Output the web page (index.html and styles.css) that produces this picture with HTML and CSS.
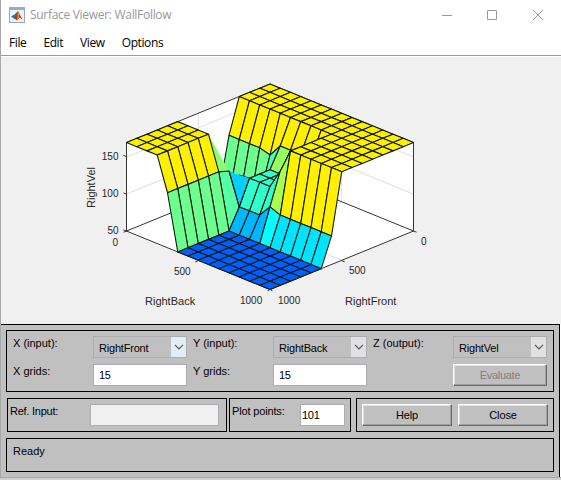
FILE: index.html
```html
<!DOCTYPE html>
<html lang="en">
<head>
<meta charset="utf-8">
<title>Surface Viewer: WallFollow</title>
<link rel="stylesheet" href="styles.css">
</head>
<body>
<div class="window">
  <header class="titlebar">
    <svg class="app-icon" width="16" height="16" viewBox="0 0 16 16">
      <rect x=".5" y=".5" width="15" height="15" fill="#eef2f5" stroke="#a0a8ae"/>
      <rect x="0" y="0" width="16" height="3" fill="#8fb0c8"/>
      <path d="M2 9.500 5.500 7.500 9 4 7.500 11 5.500 12Z" fill="#2f6f9f"/>
      <path d="M5.500 11.500 7.500 8 9 4 11 8 13.500 12.500 10.500 10.500 8 13.500Z" fill="#b73520"/>
      <path d="M9 4 10.200 8 10 10.500 8 13Z" fill="#f28c28"/>
    </svg>
    <span class="title">Surface Viewer: WallFollow</span>
    <svg class="controls" width="102" height="12" viewBox="0 0 102 12" fill="none" stroke="#999">
      <path d="M0 6.500H10M45.500 1.500H54.500V10.500H45.500Z"/>
      <path d="M91 1 101 11M101 1 91 11"/>
    </svg>
  </header>
  <nav class="menu"><span>File</span><span>Edit</span><span>View</span><span>Options</span></nav>
  <main class="plot"><svg id="plot" width="560" height="267" viewBox="1 57 560 267"></svg></main>
  <section class="panel">
    <div class="box inputs">
      <label>X (input):</label>
      <div class="combo active"><span>RightFront</span><i><svg width="10" height="6" viewBox="0 0 10 6"><path d="M1 .8 5 4.800 9 .8"/></svg></i></div>
      <label>Y (input):</label>
      <div class="combo"><span>RightBack</span><i><svg width="10" height="6" viewBox="0 0 10 6"><path d="M1 .8 5 4.800 9 .8"/></svg></i></div>
      <label>Z (output):</label>
      <div class="combo"><span>RightVel</span><i><svg width="10" height="6" viewBox="0 0 10 6"><path d="M1 .8 5 4.800 9 .8"/></svg></i></div>
      <label>X grids:</label>
      <div class="edit">15</div>
      <label>Y grids:</label>
      <div class="edit">15</div>
      <div></div>
      <div class="button disabled">Evaluate</div>
    </div>
    <div class="row">
      <div class="box ref"><label>Ref. Input:</label><div class="edit off"></div></div>
      <div class="box points"><label>Plot points:</label><div class="edit">101</div></div>
      <div class="box actions"><div class="button">Help</div><div class="button">Close</div></div>
    </div>
    <div class="box status">Ready</div>
  </section>
</div>
<script src="surface.js"></script>
</body>
</html>
```
FILE: styles.css
```css
* { box-sizing: border-box; }
body { margin: 0; background: #d0d0d0; overflow: hidden; font: 11px/13px "Liberation Sans", sans-serif; color: #000; }
.window { width: 561px; height: 478px; border-left: 1px solid #a8a8a8; border-bottom: 1px solid #a8a8a8; display: flex; flex-direction: column; background: #fff; }
.titlebar { height: 29px; display: flex; align-items: center; padding: 0 17px 0 8px; font: 12px/16px "Open Sans", "Noto Sans", sans-serif; color: #999; }
.title { margin-left: 5px; flex: 1; letter-spacing: -.3px; padding-top: 1px; }
.app-icon { display: block; }
.menu { height: 28px; display: flex; gap: 17px; padding: 6px 8px 0; font: 12px/16px "Open Sans", "Noto Sans", sans-serif; letter-spacing: -.4px; border-bottom: 1px solid #fff; background: linear-gradient(#999, #999) 0 26px / 100% 1px no-repeat; }
.plot { height: 267px; background: #f0f0f0; }
.plot svg { display: block; }
.plot text { font: 11px "Liberation Sans", sans-serif; fill: #262626; }
.plot .tick { font-size: 10px; letter-spacing: 0; }
.panel { height: 153px; width: 559px; background: #c0c0c0; border-top: 1px solid #000; border-right: 1px solid #000; padding: 5px 5px 0; display: flex; flex-direction: column; gap: 6px; }
.box { border: 1px solid #000; }
.inputs { height: 62px; width: 548px; padding: 5px 6px; display: grid; grid-template-columns: 80px 100px 80px 100px 80px 94px; grid-template-rows: 22px 22px; row-gap: 6px; }
.combo, .inputs .edit { width: 94px; }
label { padding-top: 1px; white-space: nowrap; }
.combo { height: 22px; border: 1px solid #acacb2; display: flex; justify-content: space-between; }
.combo span { padding: 5px 0 0 5px; letter-spacing: -.2px; }
.combo i { width: 15px; background: #e1e1e1; display: flex; align-items: center; justify-content: center; }
.combo.active i { background: #e3edf7; }
.combo path { fill: none; stroke: #555; stroke-width: 1.2; }
.edit { height: 22px; background: #fff; border: 1px solid #acacb2; padding: 4px 0 0 5px; letter-spacing: -.3px; }
.edit.off { background: #f0f0f0; }
.button { height: 22px; border: 1px solid; border-color: #fff #696969 #696969 #fff; box-shadow: inset -1px -1px #a0a0a0, inset 1px 1px #e3e3e3; text-align: center; padding-top: 4px; letter-spacing: -.1px; }
.disabled { color: #808080; letter-spacing: -.3px; }
.row { display: flex; height: 34px; margin-left: 1px; }
.row .box { display: flex; padding-top: 5px; }
.ref { width: 220px; padding-left: 2px; }
.ref label { width: 80px; letter-spacing: -.25px; }
.ref .edit { width: 129px; }
.points { width: 122px; margin-left: 2px; padding-left: 2px; }
.points label { width: 68px; letter-spacing: -.15px; }
.points .edit { width: 45px; padding-left: 1px; }
.actions { width: 198px; margin-left: 5px; padding-left: 5px; gap: 6px; }
.actions .button { width: 90px; }
.status { height: 34px; width: 548px; padding: 6px; }
```
FILE: surface.js
```js
const N = 14, svg = document.getElementById('plot');
const add = (tag, attrs, text) => {
  const el = document.createElementNS('http://www.w3.org/2000/svg', tag);
  for (const k in attrs) el.setAttribute(k, attrs[k]);
  if (text) el.textContent = text;
  svg.appendChild(el);
};
const FLOOR = 88.5;
// i runs along RightBack, j along RightFront, d is the drop below the top plane
const project = (i, j, d) => [270 + 10.25 * (i - j), 84 + 4.18 * (i + j) + d];
const line = (a, b, stroke) => add('line', { x1: a[0], y1: a[1], x2: b[0], y2: b[1], stroke });
const DARK = '#333', GRID = '#dedede';

add('polygon', { points: [[0,14,FLOOR],[0,14,0],[0,0,0],[14,0,0],[14,0,FLOOR],[14,14,FLOOR]].map(p => project(...p)).join(' '), fill: '#fff' });
[14.5, 51.5].forEach(d => {
  line(project(0, 14, d), project(0, 0, d), GRID);
  line(project(0, 0, d), project(14, 0, d), GRID);
});
line(project(0, 7, 0), project(0, 7, FLOOR), GRID);
line(project(7, 0, 0), project(7, 0, FLOOR), GRID);
line(project(0, 7, FLOOR), project(14, 7, FLOOR), GRID);
line(project(7, 0, FLOOR), project(7, 14, FLOOR), GRID);
line(project(0, 14, 0), project(0, 0, 0), DARK);
line(project(0, 0, 0), project(14, 0, 0), DARK);
line(project(0, 14, FLOOR), project(0, 0, FLOOR), DARK);
line(project(0, 0, FLOOR), project(14, 0, FLOOR), DARK);
line([126.5, 142], [126.5, 231.5], DARK);
line([413.5, 142], [413.5, 231.5], DARK);
line(project(0, 14, FLOOR), project(14, 14, FLOOR), DARK);
line(project(14, 14, FLOOR), project(14, 0, FLOOR), DARK);

const row8 = { 5: 68.7, 6: 68.3, 7: 68.3, 8: 56, 9: 60 };
function drop(i, j) {
  if (j <= 3) return 0;
  if (i >= 9) return j <= 7 ? 0 : j === 8 ? 60 : FLOOR;
  if (j === 4) return i === 4 ? 37.6 : i < 4 ? 34.6 : 24.4;
  if (j >= 9) return i <= 3 ? 0 : i === 4 ? 33.5 : FLOOR;
  if (j === 8) return i === 3 ? 23 : i === 4 ? 36.8 : row8[i] || FLOOR;
  if (i >= 5) return i === 8 ? 24.5 : 44;
  if (i === 4) return j === 7 ? 45 : 75;
  return FLOOR;
}
const hidden = (i, j) => (i < 4 && j > 4 && j < 9 && !(i === 3 && j === 8)) || (i === 3 && j > 4 && j < 8);
function colour(i, j) {
  if (i === 3 && j === 8) return '#87ff70';
  if (i === 4 && j === 8) return '#57ffa5';
  if (i === 4 && j === 7) return '#00cfff';
  if (j >= 9) return i <= 3 ? '#fff000' : i === 4 ? '#6cff90' : '#005fff';
  if (j === 8) return i <= 7 ? '#00b7ff' : i === 8 ? '#00ffff' : '#00e4ff';
  if (j === 7 && i === 8) return '#a8ff50';
  if (j <= 3 || i >= 9) return '#fff000';
  if (j === 4) return i <= 3 ? '#6cff90' : i === 4 ? '#45ffb5' : '#98ff60';
  return '#30ffcb';
}
for (let s = 0; s <= 2 * N - 2; s++) {
  for (let i = Math.max(0, s - N + 1); i <= Math.min(N - 1, s); i++) {
    const j = s - i;
    if (hidden(i, j)) continue;
    const plain = (i === 3 && j === 8) || (i === 4 && j === 7);
    add('polygon', {
      points: [[i, j], [i + 1, j], [i + 1, j + 1], [i, j + 1]].map(([a, b]) => project(a, b, drop(a, b))).join(' '),
      fill: colour(i, j), stroke: plain ? 'none' : '#101a10', 'stroke-width': 1.1, 'stroke-linejoin': 'round'
    });
  }
}
// re-ink the edges shared with the unstroked cells
line(project(4, 8, drop(4, 8)), project(5, 8, drop(5, 8)), '#101a10');
line(project(5, 7, drop(5, 7)), project(5, 8, drop(5, 8)), '#101a10');

[[156.5, '150'], [194, '100'], [231, '50']].forEach(([y, t]) => {
  line([123.5, y - 1], [126.5, y], DARK);
  add('text', { x: 118.5, y: y + 3, 'text-anchor': 'end', class: 'tick' }, t);
});
line([126.5, 231], [123.5, 232.2], DARK);
line([413.5, 231], [416.5, 232.2], DARK);
line([198.2, 260.7], [195.2, 261.9], DARK);
line([341.7, 260.7], [344.7, 261.9], DARK);
line([270, 289.5], [267.5, 290.7], DARK);
line([270, 289.5], [272.5, 290.7], DARK);
[[112.5, 246, '0'], [174, 275, '500'], [240, 304, '1000'], [278, 304, '1000'], [349, 274, '500'], [421, 245, '0']]
  .forEach(([x, y, t]) => add('text', { x, y, class: 'tick' }, t));
add('text', { x: 145, y: 305 }, 'RightBack');
add('text', { x: 345, y: 305 }, 'RightFront');
add('text', { x: 0, y: 0, transform: 'translate(95 208) rotate(-90)' }, 'RightVel');
```
